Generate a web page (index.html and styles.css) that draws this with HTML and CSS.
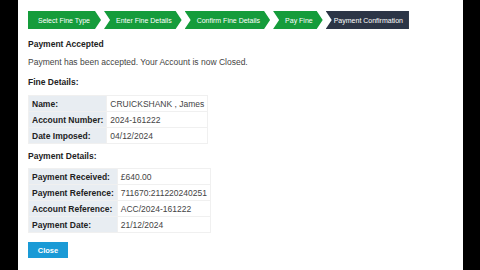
FILE: index.html
```html
<!DOCTYPE html>
<html>
<head>
<meta charset="utf-8">
<link rel="stylesheet" href="styles.css">
</head>
<body>
<div class="page">
  <nav class="steps">
    <div class="step step-first">Select Fine Type</div>
    <div class="step">Enter Fine Details</div>
    <div class="step">Confirm Fine Details</div>
    <div class="step">Pay Fine</div>
    <div class="step step-current">Payment Confirmation</div>
  </nav>

  <h2 class="title">Payment Accepted</h2>
  <p class="message">Payment has been accepted. Your Account is now Closed.</p>

  <h3 class="section">Fine Details:</h3>
  <table class="details">
    <tr><th>Name:</th><td>CRUICKSHANK , James</td></tr>
    <tr><th>Account Number:</th><td>2024-161222</td></tr>
    <tr><th>Date Imposed:</th><td>04/12/2024</td></tr>
  </table>

  <h3 class="section section-2">Payment Details:</h3>
  <table class="details">
    <tr><th>Payment Received:</th><td>£640.00</td></tr>
    <tr><th>Payment Reference:</th><td>711670:211220240251</td></tr>
    <tr><th>Account Reference:</th><td>ACC/2024-161222</td></tr>
    <tr><th>Payment Date:</th><td>21/12/2024</td></tr>
  </table>

  <button class="btn">Close</button>
</div>
</body>
</html>
```

FILE: styles.css
```css
html, body {
  margin: 0;
  padding: 0;
  background: #000;
  height: 100%;
}

body {
  font-family: "Liberation Sans", Arial, sans-serif;
  color: #333;
}

.page {
  margin-left: 18px;
  width: 445px;
  height: 270px;
  background: #fff;
  box-sizing: border-box;
  padding: 11px 0 0 10px;
}

.steps {
  display: flex;
  gap: 3px;
  height: 18px;
}

.step {
  display: flex;
  align-items: center;
  justify-content: center;
  height: 18px;
  padding: 0 10px 0 12px;
  background: #159c3b;
  color: #fff;
  font-size: 7px;
  white-space: nowrap;
  clip-path: polygon(0 0, calc(100% - 6px) 0, 100% 50%, calc(100% - 6px) 100%, 0 100%, 6px 50%);
}

.step-first {
  padding-left: 10px;
  padding-right: 11px;
  clip-path: polygon(0 0, calc(100% - 6px) 0, 100% 50%, calc(100% - 6px) 100%, 0 100%);
}

.step-current {
  background: #2c3546;
  padding: 0 6px 0 8px;
  clip-path: polygon(0 0, 100% 0, 100% 100%, 0 100%, 6px 50%);
}

.title {
  margin: 9px 0 0;
  font-size: 8.5px;
  line-height: 12px;
  font-weight: bold;
  color: #222;
}

.message {
  margin: 6px 0 0;
  font-size: 8.5px;
  line-height: 12px;
  color: #444;
}

.section {
  margin: 8px 0 0;
  font-size: 8.5px;
  line-height: 12px;
  font-weight: bold;
  color: #222;
}

.section-2 {
  margin-top: 6px;
}

.details {
  margin-top: 7px;
  border-collapse: collapse;
  font-size: 8.5px;
}

.section-2 + .details {
  margin-top: 6px;
}

.details th,
.details td {
  height: 16px;
  padding: 0 3px;
  box-sizing: border-box;
  border: 1px solid #f0f0f0;
  text-align: left;
  white-space: nowrap;
}

.details th {
  background: #e8edf2;
  font-weight: bold;
  color: #222;
}

.details td {
  color: #444;
}

.btn {
  display: block;
  margin-top: 9px;
  width: 40px;
  height: 16px;
  padding: 0;
  border: none;
  background: #1a9ad6;
  color: #fff;
  font-family: "Liberation Sans", Arial, sans-serif;
  font-size: 7.5px;
  font-weight: bold;
}
```
